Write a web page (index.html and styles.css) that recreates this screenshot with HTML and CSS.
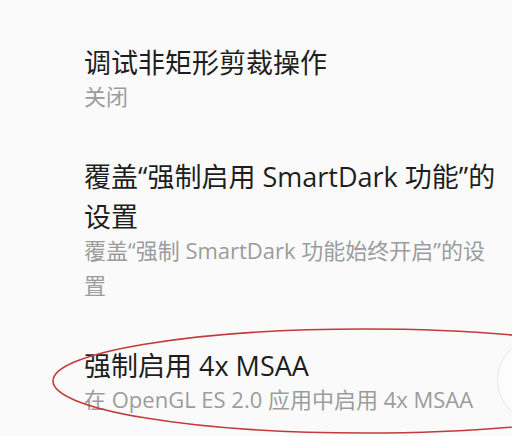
FILE: index.html
```html
<!DOCTYPE html>
<html lang="zh-CN">
<head>
    <meta charset="UTF-8">
    <meta name="viewport" content="width=device-width, initial-scale=1.0">
    <title>开发者选项</title>
    <link rel="stylesheet" href="styles.css">
</head>
<body>
    <div class="screen">
        <ul class="settings">
            <li class="item">
                <div class="item-title">调试非矩形剪裁操作</div>
                <div class="item-summary">关闭</div>
            </li>
            <li class="item">
                <div class="item-title">覆盖“强制启用 SmartDark 功能”的设置</div>
                <div class="item-summary">覆盖“强制 SmartDark 功能始终开启”的设置</div>
            </li>
            <li class="item">
                <div class="item-title">强制启用 4x MSAA</div>
                <div class="item-summary">在 OpenGL ES 2.0 应用中启用 4x MSAA</div>
            </li>
        </ul>

        <!-- bouton flottant à moitié hors écran -->
        <div class="float-btn"></div>

        <!-- annotation rouge dessinée à la main -->
        <svg class="mark" width="512" height="436" viewBox="0 0 512 436">
            <ellipse cx="365" cy="381" rx="312" ry="52" fill="none" stroke="#c23a3c" stroke-width="1.6"/>
        </svg>
    </div>
</body>
</html>
```

FILE: styles.css
```css
* {
    box-sizing: border-box;
    margin: 0;
    padding: 0;
}

body {
    font-family: 'Open Sans', 'Noto Sans CJK SC', sans-serif;
    background: #fafafa;
    width: 512px;
    height: 436px;
    overflow: hidden;
}

.screen {
    position: relative;
    width: 512px;
    height: 436px;
    overflow: hidden;
}

.settings {
    list-style: none;
    padding: 43px 14px 0 84px;
    display: flex;
    flex-direction: column;
    gap: 43px;
}

.item-title {
    font-size: 27px;
    line-height: 40px;
    color: #1e1e1e;
}

.item-summary {
    margin-top: -4px;
    font-size: 22px;
    line-height: 35px;
    color: #9c9c9c;
}

.float-btn {
    position: absolute;
    left: 497px;
    top: 337px;
    width: 86px;
    height: 86px;
    border-radius: 50%;
    border: 1px solid #e8e8e8;
    background: rgba(255, 255, 255, 0.4);
}

.mark {
    position: absolute;
    left: 0;
    top: 0;
}
```
